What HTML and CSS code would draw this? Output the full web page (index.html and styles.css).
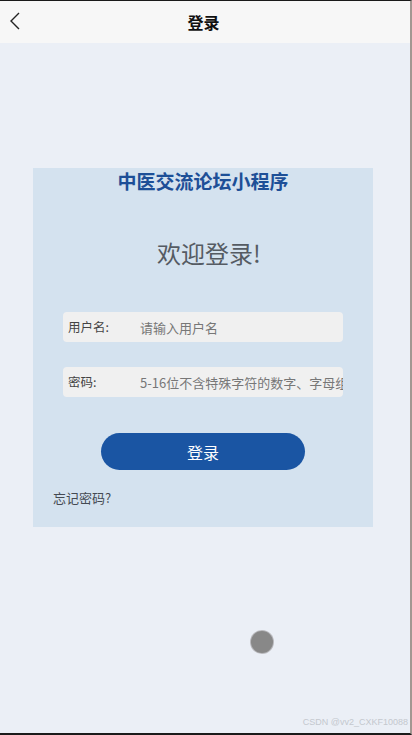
FILE: index.html
```html
<!DOCTYPE html>
<html lang="zh">
<head>
    <meta charset="UTF-8">
    <meta name="viewport" content="width=device-width, initial-scale=1.0">
    <title>登录</title>
    <link rel="stylesheet" href="styles.css">
</head>
<body>
    <div class="frame">
        <header class="nav">
            <span class="back">
                <svg width="12" height="18" viewBox="0 0 12 18"><path d="M10 1 L2 9 L10 17" fill="none" stroke="#222" stroke-width="1.4"/></svg>
            </span>
            <h1>登录</h1>
        </header>

        <main class="page">
            <div class="card">
                <h2 class="app-name">中医交流论坛小程序</h2>
                <p class="welcome">欢迎登录!</p>

                <div class="field">
                    <label>用户名:</label>
                    <span class="placeholder">请输入用户名</span>
                </div>
                <div class="field field-pwd">
                    <label>密码:</label>
                    <span class="placeholder">5-16位不含特殊字符的数字、字母组合</span>
                </div>

                <button class="btn-login">登录</button>
                <a class="forgot">忘记密码?</a>
            </div>
        </main>

        <div class="float-dot"></div>
        <div class="watermark">CSDN @vv2_CXKF10088</div>
    </div>
</body>
</html>
```

FILE: styles.css
```css
* { box-sizing: border-box; margin: 0; padding: 0; }
body { font-family: "Noto Sans CJK SC", "Noto Sans", sans-serif; color: #333; }

.frame { position: relative; height: 735px; background: #ebeff6; border-top: 1px solid #1a1a1a;
         border-right: 2px solid #a39792; border-bottom: 2px solid #1a1a1a; overflow: hidden; }

/* 顶部导航 */
.nav { height: 42px; background: #f7f7f7; display: flex; align-items: center; justify-content: center; position: relative; }
.nav h1 { font-size: 16px; font-weight: bold; color: #111; line-height: 20px; margin-left: -3px; }
.back { position: absolute; left: 9px; top: 11px; display: flex; }

.page { padding-top: 125px; }
.card { margin-left: 33px; width: 340px; height: 359px; background: #d4e2ef; display: flex; flex-direction: column; }

.app-name { font-size: 19px; line-height: 26px; font-weight: bold; color: #1d4f97; text-align: center; }
.welcome { margin-top: 43px; padding-left: 12px; font-size: 24px; line-height: 32px; color: #555b63; text-align: center; }

.field { margin: 43px 0 0 30px; width: 280px; height: 30px; background: #f0f0f0; border-radius: 4px;
         display: flex; align-items: center; padding-left: 5px; white-space: nowrap; overflow: hidden; }
.field-pwd { margin-top: 25px; }
.field label { flex-shrink: 0; width: 72px; font-size: 12.5px; font-weight: normal; color: #444; margin-top: -2px; }
.placeholder { font-size: 13px; color: #777; }

.btn-login { margin: 36px 0 0 68px; width: 204px; height: 37px; border: none; border-radius: 19px;
             background: #1a55a3; color: #fff; font-family: inherit; font-size: 16px; cursor: pointer; }
.forgot { margin: 19px 0 0 20px; font-size: 13px; line-height: 18px; color: #444a52; }

/* 悬浮按钮 */
.float-dot { position: absolute; left: 251px; top: 630px; width: 22px; height: 22px; border-radius: 50%;
             background: #888; box-shadow: 0 0 0 1px #b9b9bd; }
.watermark { position: absolute; right: 2px; bottom: 6px; font-family: "Liberation Sans", sans-serif; font-size: 9px; color: #c4c8ce; }
```
